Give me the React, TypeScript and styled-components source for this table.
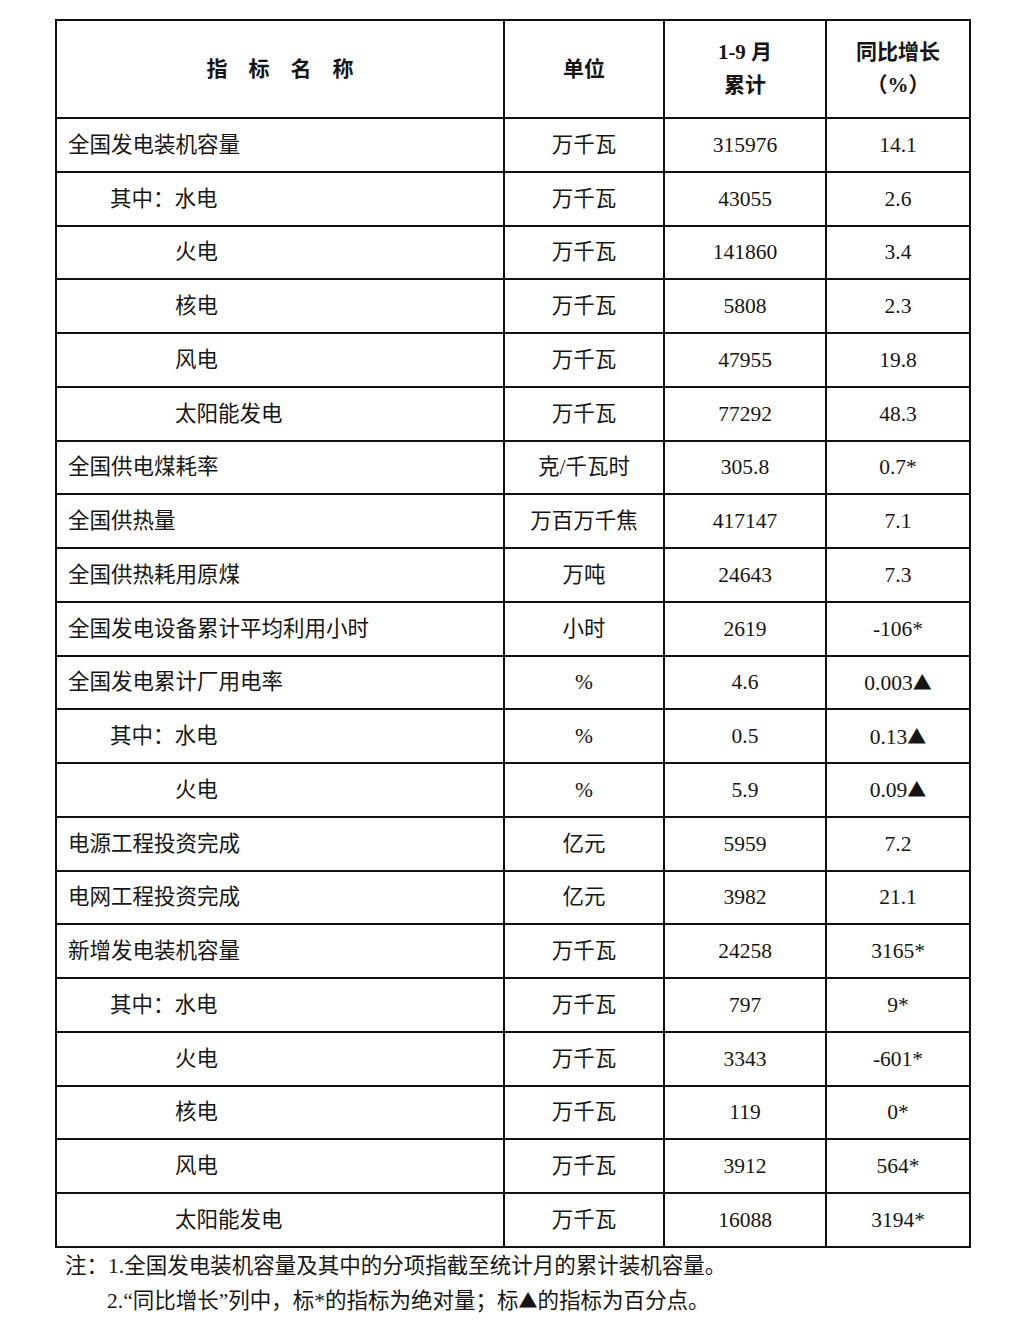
import React from "react";
import styled, { createGlobalStyle } from "styled-components";

const Global = createGlobalStyle`
  html, body { margin: 0; padding: 0; background: #fff; }
  body { font-family: "Liberation Serif", "Noto Sans CJK SC", serif; color: #151515; }
`;

const Page = styled.div`
  padding: 19px 0 0 55px;
  width: 972px;
  box-sizing: border-box;
`;

const Table = styled.table`
  border-collapse: collapse;
  table-layout: fixed;
  width: 914px;
`;

const HeadCell = styled.th<{ $spaced?: boolean }>`
  border: 2px solid #111;
  height: 96px;
  padding: 0;
  font-size: 21px;
  font-weight: 700;
  line-height: 33px;
  text-align: center;
  vertical-align: middle;
  letter-spacing: ${(p) => (p.$spaced ? "1em" : "0")};
  text-indent: ${(p) => (p.$spaced ? "1em" : "0")};
`;

const Cell = styled.td<{ $indent?: number; $align?: "left" | "center" }>`
  border: 2px solid #111;
  height: 51.75px;
  padding: 0;
  padding-left: ${(p) => (p.$align === "left" ? 11 + (p.$indent ?? 0) : 0)}px;
  font-size: 21.5px;
  line-height: 24px;
  text-align: ${(p) => p.$align ?? "center"};
  vertical-align: middle;
  white-space: nowrap;
`;

const Tri = styled.span`
  font-family: "Noto Sans CJK SC", sans-serif;
  font-size: 19px;
`;

const Notes = styled.div`
  font-size: 21.5px;
  line-height: 34px;
  padding: 1px 0 0 10px;
`;

const NoteLine = styled.div<{ $indent?: number }>`
  padding-left: ${(p) => p.$indent ?? 0}px;
`;

type Row = { name: string; level: 0 | 1 | 2; unit: string; value: string; growth: string };

const rows: Row[] = [
  { name: "全国发电装机容量", level: 0, unit: "万千瓦", value: "315976", growth: "14.1" },
  { name: "其中：水电", level: 1, unit: "万千瓦", value: "43055", growth: "2.6" },
  { name: "火电", level: 2, unit: "万千瓦", value: "141860", growth: "3.4" },
  { name: "核电", level: 2, unit: "万千瓦", value: "5808", growth: "2.3" },
  { name: "风电", level: 2, unit: "万千瓦", value: "47955", growth: "19.8" },
  { name: "太阳能发电", level: 2, unit: "万千瓦", value: "77292", growth: "48.3" },
  { name: "全国供电煤耗率", level: 0, unit: "克/千瓦时", value: "305.8", growth: "0.7*" },
  { name: "全国供热量", level: 0, unit: "万百万千焦", value: "417147", growth: "7.1" },
  { name: "全国供热耗用原煤", level: 0, unit: "万吨", value: "24643", growth: "7.3" },
  { name: "全国发电设备累计平均利用小时", level: 0, unit: "小时", value: "2619", growth: "-106*" },
  { name: "全国发电累计厂用电率", level: 0, unit: "%", value: "4.6", growth: "0.003▲" },
  { name: "其中：水电", level: 1, unit: "%", value: "0.5", growth: "0.13▲" },
  { name: "火电", level: 2, unit: "%", value: "5.9", growth: "0.09▲" },
  { name: "电源工程投资完成", level: 0, unit: "亿元", value: "5959", growth: "7.2" },
  { name: "电网工程投资完成", level: 0, unit: "亿元", value: "3982", growth: "21.1" },
  { name: "新增发电装机容量", level: 0, unit: "万千瓦", value: "24258", growth: "3165*" },
  { name: "其中：水电", level: 1, unit: "万千瓦", value: "797", growth: "9*" },
  { name: "火电", level: 2, unit: "万千瓦", value: "3343", growth: "-601*" },
  { name: "核电", level: 2, unit: "万千瓦", value: "119", growth: "0*" },
  { name: "风电", level: 2, unit: "万千瓦", value: "3912", growth: "564*" },
  { name: "太阳能发电", level: 2, unit: "万千瓦", value: "16088", growth: "3194*" },
];

const indents = [0, 42, 107];

function withTri(s: string) {
  if (!s.endsWith("▲")) return s;
  return (
    <>
      {s.slice(0, -1)}
      <Tri>▲</Tri>
    </>
  );
}

export default function App() {
  return (
    <>
      <Global />
      <Page>
        <Table>
          <colgroup>
            <col style={{ width: 448 }} />
            <col style={{ width: 160 }} />
            <col style={{ width: 162 }} />
            <col style={{ width: 144 }} />
          </colgroup>
          <thead>
            <tr>
              <HeadCell $spaced>指标名称</HeadCell>
              <HeadCell>单位</HeadCell>
              <HeadCell>
                1-9 月
                <br />
                累计
              </HeadCell>
              <HeadCell>
                同比增长
                <br />
                （%）
              </HeadCell>
            </tr>
          </thead>
          <tbody>
            {rows.map((r, i) => (
              <tr key={i}>
                <Cell $align="left" $indent={indents[r.level]}>
                  {r.name}
                </Cell>
                <Cell>{r.unit}</Cell>
                <Cell>{r.value}</Cell>
                <Cell>{withTri(r.growth)}</Cell>
              </tr>
            ))}
          </tbody>
        </Table>
        <Notes>
          <NoteLine>注：1.全国发电装机容量及其中的分项指截至统计月的累计装机容量。</NoteLine>
          <NoteLine $indent={42}>
            2.“同比增长”列中，标*的指标为绝对量；标<Tri>▲</Tri>的指标为百分点。
          </NoteLine>
        </Notes>
      </Page>
    </>
  );
}
